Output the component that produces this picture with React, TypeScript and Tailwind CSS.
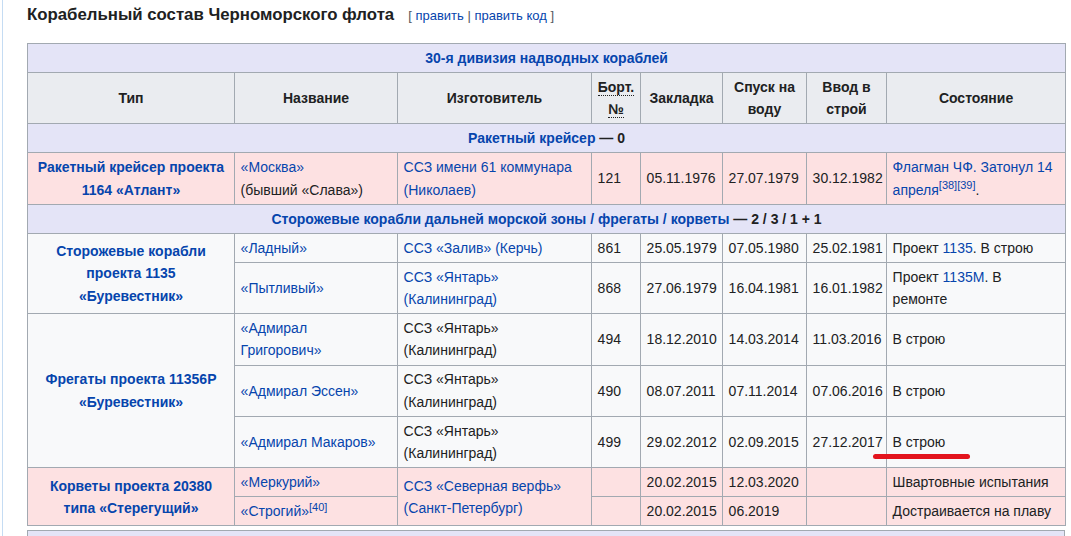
import React from 'react';

const LINK = 'text-[#0645ad]';

type Cell = React.ReactNode;

const td = 'border border-[#a2a9b1] px-[5.6px] py-[2.8px] align-middle text-left';
const thType = 'border border-[#a2a9b1] px-[5.6px] py-[2.8px] align-middle text-center font-bold';

const A: React.FC<{ children: React.ReactNode }> = ({ children }) => (
    <span className={LINK}>{children}</span>
);

// preflight already lifts <sup> by -0.5em, so only size it
const Sup: React.FC<{ children: React.ReactNode }> = ({ children }) => (
    <sup className={`${LINK} text-[11px] leading-none`}>{children}</sup>
);

const SectionRow: React.FC<{ children: React.ReactNode }> = ({ children }) => (
    <tr className="bg-[#e4e4f7]">
        <th colSpan={8} className={thType}>
            {children}
        </th>
    </tr>
);

const DataCells: React.FC<{ cells: Cell[] }> = ({ cells }) => (
    <>
        {cells.map((c, i) => (
            <td key={i} className={td}>
                {c}
            </td>
        ))}
    </>
);

export default function App() {
    return (
        <div
            className="min-h-screen flex bg-white text-[#202122] text-[14px] leading-[22.4px]"
            style={{ fontFamily: '"Liberation Sans", Arial, sans-serif' }}
        >
            <div className="w-[2px]" />
            <div className="w-px bg-[#c5dcf3]" />
            <div className="pl-[24px] pt-[4px]">
                <div className="flex items-baseline h-[22px] mb-[17px]">
                    <h3 className="text-[16.8px] font-bold leading-[22px]">Корабельный состав Черноморского флота</h3>
                    <span className="ml-[14px] text-[13px] text-[#54595d]">
                        [ <A>править</A> | <A>править код</A> ]
                    </span>
                </div>

                <table className="table-fixed border-collapse border border-[#a2a9b1] w-[1038px] bg-[#f8f9fa]">
                    <colgroup>
                        <col className="w-[207px]" />
                        <col className="w-[163px]" />
                        <col className="w-[194px]" />
                        <col className="w-[49px]" />
                        <col className="w-[82px]" />
                        <col className="w-[84px]" />
                        <col className="w-[80px]" />
                        <col className="w-[179px]" />
                    </colgroup>
                    <tbody>
                        <SectionRow>
                            <A>30-я дивизия надводных кораблей</A>
                        </SectionRow>
                        <tr className="bg-[#eaecf0]">
                            {['Тип', 'Название', 'Изготовитель'].map((h) => (
                                <th key={h} className={thType}>
                                    {h}
                                </th>
                            ))}
                            <th className={thType}>
                                <span className="border-b border-dotted border-[#202122]">Борт.</span>
                                <br />
                                <span className="border-b border-dotted border-[#202122]">№</span>
                            </th>
                            {['Закладка', 'Спуск на воду', 'Ввод в строй', 'Состояние'].map((h) => (
                                <th key={h} className={thType}>
                                    {h}
                                </th>
                            ))}
                        </tr>

                        <SectionRow>
                            <A>Ракетный крейсер</A> — 0
                        </SectionRow>
                        <tr className="bg-[#fde1e2]">
                            <th className={thType}>
                                <A>Ракетный крейсер проекта 1164 «Атлант»</A>
                            </th>
                            <DataCells
                                cells={[
                                    <>
                                        <A>«Москва»</A>
                                        <br />
                                        (бывший «Слава»)
                                    </>,
                                    <A>
                                        ССЗ имени 61 коммунара
                                        <br />
                                        (Николаев)
                                    </A>,
                                    '121',
                                    '05.11.1976',
                                    '27.07.1979',
                                    '30.12.1982',
                                    <>
                                        <A>Флагман ЧФ. Затонул 14 апреля</A>
                                        <Sup>[38]</Sup>
                                        <Sup>[39]</Sup>.
                                    </>,
                                ]}
                            />
                        </tr>

                        <SectionRow>
                            <A>Сторожевые корабли дальней морской зоны / фрегаты / корветы</A> — 2 / 3 / 1 + 1
                        </SectionRow>
                        <tr>
                            <th rowSpan={2} className={thType}>
                                <A>Сторожевые корабли проекта 1135 «Буревестник»</A>
                            </th>
                            <DataCells
                                cells={[
                                    <A>«Ладный»</A>,
                                    <A>ССЗ «Залив» (Керчь)</A>,
                                    '861',
                                    '25.05.1979',
                                    '07.05.1980',
                                    '25.02.1981',
                                    <>
                                        Проект <A>1135</A>. В строю
                                    </>,
                                ]}
                            />
                        </tr>
                        <tr>
                            <DataCells
                                cells={[
                                    <A>«Пытливый»</A>,
                                    <A>
                                        ССЗ «Янтарь»
                                        <br />
                                        (Калининград)
                                    </A>,
                                    '868',
                                    '27.06.1979',
                                    '16.04.1981',
                                    '16.01.1982',
                                    <>
                                        Проект <A>1135М</A>. В<br />
                                        ремонте
                                    </>,
                                ]}
                            />
                        </tr>

                        <tr>
                            <th rowSpan={3} className={thType}>
                                <A>Фрегаты проекта 11356Р «Буревестник»</A>
                            </th>
                            <DataCells
                                cells={[
                                    <A>
                                        «Адмирал
                                        <br />
                                        Григорович»
                                    </A>,
                                    <>
                                        ССЗ «Янтарь»
                                        <br />
                                        (Калининград)
                                    </>,
                                    '494',
                                    '18.12.2010',
                                    '14.03.2014',
                                    '11.03.2016',
                                    'В строю',
                                ]}
                            />
                        </tr>
                        <tr>
                            <DataCells
                                cells={[
                                    <A>«Адмирал Эссен»</A>,
                                    <>
                                        ССЗ «Янтарь»
                                        <br />
                                        (Калининград)
                                    </>,
                                    '490',
                                    '08.07.2011',
                                    '07.11.2014',
                                    '07.06.2016',
                                    'В строю',
                                ]}
                            />
                        </tr>
                        <tr>
                            <DataCells
                                cells={[
                                    <A>«Адмирал Макаров»</A>,
                                    <>
                                        ССЗ «Янтарь»
                                        <br />
                                        (Калининград)
                                    </>,
                                    '499',
                                    '29.02.2012',
                                    '02.09.2015',
                                    '27.12.2017',
                                ]}
                            />
                            <td className={`${td} relative`}>
                                В строю
                                {/* red marker stroke over the screenshot */}
                                <span className="absolute left-[-14px] top-[37px] w-[97px] h-[5px] rounded-full bg-[#e3141d]" />
                            </td>
                        </tr>

                        <tr className="bg-[#fde1e2]">
                            <th rowSpan={2} className={thType}>
                                <A>Корветы проекта 20380 типа «Стерегущий»</A>
                            </th>
                            <td className={td}>
                                <A>«Меркурий»</A>
                            </td>
                            <td rowSpan={2} className={td}>
                                <A>
                                    ССЗ «Северная верфь»
                                    <br />
                                    (Санкт-Петербург)
                                </A>
                            </td>
                            <DataCells cells={['', '20.02.2015', '12.03.2020', '', 'Швартовные испытания']} />
                        </tr>
                        <tr className="bg-[#fde1e2]">
                            <td className={td}>
                                <A>«Строгий»</A>
                                <Sup>[40]</Sup>
                            </td>
                            <DataCells cells={['', '20.02.2015', '06.2019', '', 'Достраивается на плаву']} />
                        </tr>
                    </tbody>
                </table>

                <table className="mt-[4px] border-collapse border border-[#a2a9b1] w-[1038px]">
                    <tbody>
                        <tr className="bg-[#e4e4f7]">
                            <th className={thType}>&nbsp;</th>
                        </tr>
                    </tbody>
                </table>
            </div>
        </div>
    );
}
